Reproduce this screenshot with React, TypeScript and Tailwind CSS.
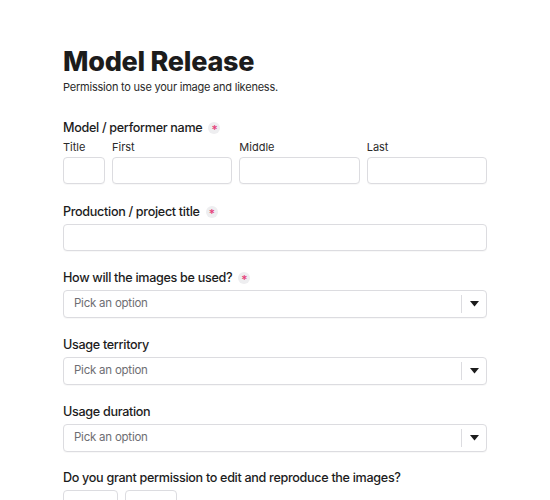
import React from "react";

const Req = () => (
  <span className="ml-[6px] inline-flex h-[12px] w-[12px] items-center justify-center rounded-full bg-[#eeeef0] text-[12px] leading-none text-[#e5407a]">
    <span className="mt-[3px]">*</span>
  </span>
);

const Label = ({ children, req }: { children: React.ReactNode; req?: boolean }) => (
  <div className="mb-1 flex h-4 items-center text-[12.6px] font-medium leading-4 tracking-[-0.025em] text-[#1c1c1c]">
    {children}
    {req && <Req />}
  </div>
);

const Box = ({ className = "" }: { className?: string }) => (
  <div className={`h-[27px] rounded-[4px] border border-[#dcdce0] bg-white shadow-[0_1px_1px_rgba(0,0,0,0.03)] ${className}`} />
);

const Select = () => (
  <div className="flex h-[28px] items-center rounded-[4px] border border-[#dcdce0] bg-white shadow-[0_1px_1px_rgba(0,0,0,0.03)]">
    <span className="flex-1 pl-[10px] text-[11.5px] tracking-[-0.02em] text-[#6e6e73]">Pick an option</span>
    <span className="h-[18px] w-px bg-[#dcdce0]" />
    <span className="flex w-[24px] items-center justify-center">
      <svg width="9" height="6" viewBox="0 0 9 6">
        <path d="M0 0 H9 L4.5 5.5 Z" fill="#1c1c1c" />
      </svg>
    </span>
  </div>
);

export default function App() {
  return (
    <div className="min-h-[500px] bg-white" style={{ fontFamily: "Inter, 'Noto Sans', sans-serif" }}>
      <div className="mx-auto w-[424px] pt-[46px]">
        <h1 className="text-[27px] font-extrabold leading-[32px] tracking-[-0.01em] text-[#1c1c1c]">Model Release</h1>
        <p className="mt-[2px] text-[11px] leading-[14px] tracking-[-0.02em] text-[#2a2a2a]">Permission to use your image and likeness.</p>

        <div className="mt-[26px]">
          <Label req>Model / performer name</Label>
          <div className="flex gap-[7px]">
            <div className="w-[42px]">
              <div className="mb-[3px] text-[11px] leading-[14px] text-[#2a2a2a]">Title</div>
              <Box />
            </div>
            {["First", "Middle", "Last"].map((t) => (
              <div key={t} className="flex-1">
                <div className="mb-[3px] text-[11px] leading-[14px] text-[#2a2a2a]">{t}</div>
                <Box />
              </div>
            ))}
          </div>
        </div>

        <div className="mt-[20px]">
          <Label req>Production / project title</Label>
          <Box />
        </div>

        <div className="mt-[19px]">
          <Label req>How will the images be used?</Label>
          <Select />
        </div>

        <div className="mt-[19px]">
          <Label>Usage territory</Label>
          <Select />
        </div>

        <div className="mt-[19px]">
          <Label>Usage duration</Label>
          <Select />
        </div>

        <div className="mt-[18px]">
          <Label>Do you grant permission to edit and reproduce the images?</Label>
          <div className="mt-[4px] flex gap-[7px]">
            <div className="h-[28px] w-[55px] rounded-[4px] border border-[#dcdce0] bg-white" />
            <div className="h-[28px] w-[52px] rounded-[4px] border border-[#dcdce0] bg-white" />
          </div>
        </div>
      </div>
    </div>
  );
}
